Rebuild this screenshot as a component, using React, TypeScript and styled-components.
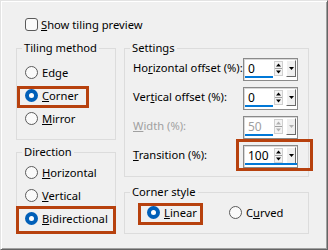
import React from 'react';
import styled, { createGlobalStyle } from 'styled-components';

const GlobalStyle = createGlobalStyle`
  html, body {
    margin: 0;
    padding: 0;
    background: #f0f0f0;
  }
  body {
    font-family: "Noto Sans", "Liberation Sans", sans-serif;
    font-size: 11.2px;
    color: #000;
  }
`;

const RED = '#b7410e';

const Dialog = styled.div`
  width: 328px;
  height: 250px;
  box-sizing: border-box;
  border: 1px solid;
  border-color: #e3e3e3 #646464 #646464 #e3e3e3;
  box-shadow: inset 1px 1px #ffffff, inset -1px -1px #a0a0a0;
  padding: 15px 0 0 15px;
  background: #f0f0f0;
`;

const CheckRow = styled.label`
  display: flex;
  align-items: center;
  height: 16px;
  margin-left: 9px;
  gap: 3px;
`;

const Columns = styled.div`
  display: grid;
  grid-template-columns: 100px 185px;
  column-gap: 8px;
  margin-top: 8px;
`;

const Column = styled.div<{ $gap: number }>`
  display: flex;
  flex-direction: column;
  gap: ${(p) => p.$gap}px;
`;

const Group = styled.fieldset<{ $h: number }>`
  margin: 0;
  padding: 0 0 0 5px;
  min-width: 0;
  height: ${(p) => p.$h}px;
  box-sizing: border-box;
  border: 1px solid #dcdcdc;
`;

const Legend = styled.legend`
  padding: 0 2px;
  line-height: 16px;
  font-size: 11.2px;
`;

const Options = styled.div<{ $top: number; $row?: boolean }>`
  display: flex;
  flex-direction: ${(p) => (p.$row ? 'row' : 'column')};
  padding-top: ${(p) => p.$top}px;
  ${(p) => (p.$row ? 'padding-left: 14px; gap: 29px;' : '')}
`;

type Box = [number, number, number, number];

const Option = styled.label<{ $box?: Box }>`
  position: relative;
  display: flex;
  align-items: center;
  height: 23px;
  margin-left: 3px;
  gap: 4px;
  white-space: nowrap;

  ${(p) =>
    p.$box
      ? `&::after {
          content: '';
          position: absolute;
          top: ${p.$box[0]}px;
          right: ${p.$box[1]}px;
          bottom: ${p.$box[2]}px;
          left: ${p.$box[3]}px;
          border: 3px solid ${RED};
          pointer-events: none;
        }`
      : ''}
`;

const Rows = styled.div`
  display: flex;
  flex-direction: column;
  gap: 6px;
  padding: 2px 10px 0 3px;
`;

const FieldRow = styled.div<{ $disabled?: boolean }>`
  display: grid;
  grid-template-columns: 1fr 55px;
  align-items: center;
  height: 23px;
  color: ${(p) => (p.$disabled ? '#a0a0a0' : '#000')};
`;

const FieldLabel = styled.span`
  padding-bottom: 4px;
  white-space: nowrap;
`;

const Spin = styled.div<{ $box?: Box }>`
  position: relative;
  display: flex;
  align-items: center;
  width: 55px;
  height: 23px;
  box-sizing: border-box;
  border: 1px solid #8a8a8a;
  box-shadow: inset 1px 1px #d8d8d8;
  background: #fff;
  padding: 0 1px 0 4px;

  ${(p) =>
    p.$box
      ? `&::after {
          content: '';
          position: absolute;
          top: ${p.$box[0]}px;
          right: ${p.$box[1]}px;
          bottom: ${p.$box[2]}px;
          left: ${p.$box[3]}px;
          border: 3px solid ${RED};
          pointer-events: none;
        }`
      : ''}
`;

const SpinValue = styled.span<{ $disabled?: boolean }>`
  flex: 1;
  font-size: 12px;
  line-height: 16px;
  padding-bottom: 2px;
  color: ${(p) => (p.$disabled ? '#a0a0a0' : '#000')};
`;

const Bar = styled.div`
  position: absolute;
  left: 1px;
  bottom: 2px;
  height: 2px;
  background: #0078d7;
`;

const DropButton = styled.div`
  display: flex;
  align-items: center;
  justify-content: center;
  width: 10px;
  height: 17px;
  box-sizing: border-box;
  margin-left: 3px;
  margin-bottom: 2px;
  border: 1px solid;
  border-color: #ffffff #696969 #696969 #ffffff;
  background: #f0f0f0;
`;

function RadioIcon({ checked }: { checked?: boolean }) {
  return (
    <svg width="13" height="13" viewBox="0 0 13 13">
      {checked ? (
        <>
          <circle cx="6.5" cy="6.5" r="6.5" fill="#005fb8" />
          <circle cx="6.5" cy="6.5" r="2.5" fill="#fff" />
        </>
      ) : (
        <circle cx="6.5" cy="6.5" r="6" fill="#fafafa" stroke="#5a5a5a" />
      )}
    </svg>
  );
}

function CheckIcon() {
  return (
    <svg width="13" height="13" viewBox="0 0 13 13">
      <rect x="0.5" y="0.5" width="12" height="12" rx="2.5" fill="#fafafa" stroke="#5a5a5a" />
    </svg>
  );
}

function SpinArrows({ disabled }: { disabled?: boolean }) {
  const c = disabled ? '#b0b0b0' : '#000';
  return (
    <svg width="9" height="15" viewBox="0 0 9 15" style={{ marginBottom: 2 }}>
      <rect x="0.5" y="0.5" width="8" height="14" fill="#f4f4f4" stroke="#d0d0d0" />
      <polygon points="2,5.5 7,5.5 4.5,2.5" fill={c} />
      <line x1="1" y1="7.5" x2="8" y2="7.5" stroke="#a0a0a0" />
      <polygon points="2,9.5 7,9.5 4.5,12.5" fill={c} />
    </svg>
  );
}

function SpinBox({
  value,
  bar,
  disabled,
  box,
}: {
  value: string;
  bar: number;
  disabled?: boolean;
  box?: Box;
}) {
  return (
    <Spin $box={box}>
      <SpinValue $disabled={disabled}>{value}</SpinValue>
      <SpinArrows disabled={disabled} />
      <DropButton>
        <svg width="5" height="3" viewBox="0 0 5 3">
          <polygon points="0,0 5,0 2.5,3" fill={disabled ? '#b0b0b0' : '#000'} />
        </svg>
      </DropButton>
      <Bar style={{ width: bar }} />
    </Spin>
  );
}

function Radio({
  label,
  checked,
  box,
}: {
  label: React.ReactNode;
  checked?: boolean;
  box?: Box;
}) {
  return (
    <Option $box={box}>
      <RadioIcon checked={checked} />
      <span>{label}</span>
    </Option>
  );
}

export default function App() {
  return (
    <>
      <GlobalStyle />
      <Dialog>
        <CheckRow>
          <CheckIcon />
          <span>
            <u>S</u>how tiling preview
          </span>
        </CheckRow>
        <Columns>
          <Column $gap={4}>
            <Group $h={100}>
              <Legend>Tiling method</Legend>
              <Options $top={5}>
                <Radio label="Edge" />
                <Radio
                  checked
                  label={
                    <>
                      <u>C</u>orner
                    </>
                  }
                  box={[2, 26, -1, -8]}
                />
                <Radio
                  label={
                    <>
                      <u>M</u>irror
                    </>
                  }
                />
              </Options>
            </Group>
            <Group $h={90}>
              <Legend>Direction</Legend>
              <Options $top={1}>
                <Radio
                  label={
                    <>
                      <u>H</u>orizontal
                    </>
                  }
                />
                <Radio
                  label={
                    <>
                      <u>V</u>ertical
                    </>
                  }
                />
                <Radio
                  checked
                  label={
                    <>
                      <u>B</u>idirectional
                    </>
                  }
                  box={[-1, -1, -4, -9]}
                />
              </Options>
            </Group>
          </Column>
          <Column $gap={7}>
            <Group $h={137}>
              <Legend>Settings</Legend>
              <Rows>
                <FieldRow>
                  <FieldLabel>
                    Ho<u>r</u>izontal offset (%):
                  </FieldLabel>
                  <SpinBox value="0" bar={28} />
                </FieldRow>
                <FieldRow>
                  <FieldLabel>
                    Ver<u>t</u>ical offset (%):
                  </FieldLabel>
                  <SpinBox value="0" bar={28} />
                </FieldRow>
                <FieldRow $disabled>
                  <FieldLabel>
                    <u>W</u>idth (%):
                  </FieldLabel>
                  <SpinBox value="50" bar={28} disabled />
                </FieldRow>
                <FieldRow>
                  <FieldLabel>
                    <u>T</u>ransition (%):
                  </FieldLabel>
                  <SpinBox value="100" bar={52} box={[-7, -16, -4, -8]} />
                </FieldRow>
              </Rows>
            </Group>
            <Group $h={50}>
              <Legend>Corner style</Legend>
              <Options $top={1} $row>
                <Radio
                  checked
                  label={
                    <>
                      <u>L</u>inear
                    </>
                  }
                  box={[2, -6, -1, -9]}
                />
                <Radio
                  label={
                    <>
                      C<u>u</u>rved
                    </>
                  }
                />
              </Options>
            </Group>
          </Column>
        </Columns>
      </Dialog>
    </>
  );
}
